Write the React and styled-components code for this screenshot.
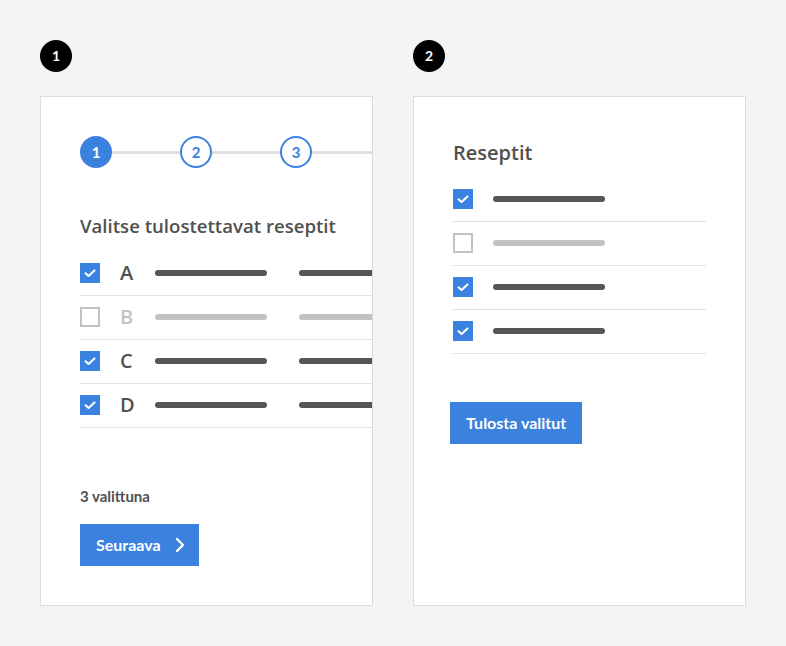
import React from 'react';
import styled, { createGlobalStyle } from 'styled-components';

const BLUE = '#3b82df';
const TEXT = '#505050';
const MUTED = '#c2c2c2';
const LINE = '#e0e0e0';

const GlobalStyle = createGlobalStyle`
  * { box-sizing: border-box; }
  body {
    margin: 0;
    background: #f4f4f4;
    font-family: Lato, "Open Sans", sans-serif;
    color: ${TEXT};
  }
`;

const Page = styled.div`
  display: flex;
  gap: 40px;
  padding: 40px;
`;

const Column = styled.div`
  display: flex;
  flex-direction: column;
  gap: 24px;
  width: 333px;
`;

const Badge = styled.div`
  width: 32px;
  height: 32px;
  border-radius: 50%;
  background: #000;
  color: #fff;
  font: 700 14px/32px Lato, sans-serif;
  text-align: center;
`;

const Card = styled.div`
  height: 510px;
  background: #fff;
  border: 1px solid #dcdcdc;
  overflow: hidden;
  padding: ${(p) => p.$padding};
`;

const Stepper = styled.div`
  display: flex;
  align-items: center;
  width: 420px;
`;

const Step = styled.div`
  flex: 0 0 32px;
  height: 32px;
  border-radius: 50%;
  border: 2px solid ${BLUE};
  background: ${(p) => (p.$active ? BLUE : '#fff')};
  color: ${(p) => (p.$active ? '#fff' : BLUE)};
  font: 700 15px/28px Lato, sans-serif;
  text-align: center;
`;

const Connector = styled.div`
  flex: ${(p) => (p.$rest ? '1 1 auto' : '0 0 68px')};
  height: 3px;
  background: ${LINE};
`;

const Title = styled.h2`
  margin: ${(p) => p.$margin};
  font: 600 ${(p) => p.$size}px/24px "Open Sans", sans-serif;
  color: ${TEXT};
  white-space: nowrap;
`;

const List = styled.div`
  width: ${(p) => p.$width};
`;

const Row = styled.div`
  display: flex;
  align-items: center;
  height: 44px;
  border-bottom: 1px solid ${LINE};
  padding-bottom: 1px;
`;

const Box = styled.div`
  flex: 0 0 20px;
  height: 20px;
  margin-right: 20px;
  background: ${(p) => (p.$checked ? BLUE : '#fff')};
  border: ${(p) => (p.$checked ? 'none' : `2px solid ${MUTED}`)};
  display: flex;
  align-items: center;
  justify-content: center;
`;

const Letter = styled.span`
  flex: 0 0 35px;
  font: 600 20px/24px "Open Sans", sans-serif;
  color: ${(p) => (p.$off ? MUTED : TEXT)};
`;

const Bar = styled.div`
  flex: 0 0 112px;
  height: 6px;
  border-radius: 3px;
  margin-right: 32px;
  background: ${(p) => (p.$off ? MUTED : '#555')};
`;

const Count = styled.div`
  margin-top: 58px;
  font: 700 15px/20px Lato, sans-serif;
  color: ${TEXT};
`;

const Button = styled.button`
  display: inline-flex;
  align-items: center;
  gap: 14px;
  height: 42px;
  margin: ${(p) => p.$margin};
  padding: ${(p) => (p.$icon ? '0 14px 0 16px' : '0 16px')};
  border: none;
  background: ${BLUE};
  color: #fff;
  font: 700 16px/1 Lato, sans-serif;
  cursor: pointer;
`;

const Check = () => (
  <svg width="20" height="20" viewBox="0 0 20 20">
    <path d="M5.5 10.2 L8.6 13 L14.5 7.4" fill="none" stroke="#fff" strokeWidth="2" strokeLinecap="round" strokeLinejoin="round" />
  </svg>
);

const Chevron = () => (
  <svg width="10" height="16" viewBox="0 0 10 16">
    <path d="M2 2 L8 8 L2 14" fill="none" stroke="#fff" strokeWidth="2.4" strokeLinecap="round" strokeLinejoin="round" />
  </svg>
);

const recipes = [
  { letter: 'A', checked: true },
  { letter: 'B', checked: false },
  { letter: 'C', checked: true },
  { letter: 'D', checked: true },
];

const App = () => (
  <>
    <GlobalStyle />
    <Page>
      <Column>
        <Badge>1</Badge>
        <Card $padding="39px 0 0 39px">
          <Stepper>
            <Step $active>1</Step>
            <Connector />
            <Step>2</Step>
            <Connector />
            <Step>3</Step>
            <Connector $rest />
          </Stepper>
          <Title $size={18.6} $margin="46px 0 14px">Valitse tulostettavat reseptit</Title>
          <List $width="420px">
            {recipes.map((r) => (
              <Row key={r.letter}>
                <Box $checked={r.checked}>{r.checked && <Check />}</Box>
                <Letter $off={!r.checked}>{r.letter}</Letter>
                <Bar $off={!r.checked} />
                <Bar $off={!r.checked} />
              </Row>
            ))}
          </List>
          <Count>3 valittuna</Count>
          <Button $icon $margin="18px 0 0">
            Seuraava
            <Chevron />
          </Button>
        </Card>
      </Column>
      <Column>
        <Badge>2</Badge>
        <Card $padding="44px 39px 0 39px">
          <Title $size={20} $margin="0 0 13px">Reseptit</Title>
          <List $width="100%">
            {recipes.map((r) => (
              <Row key={r.letter}>
                <Box $checked={r.checked}>{r.checked && <Check />}</Box>
                <Bar $off={!r.checked} />
              </Row>
            ))}
          </List>
          <Button $margin="48px 0 0 -3px">Tulosta valitut</Button>
        </Card>
      </Column>
    </Page>
  </>
);

export default App;
